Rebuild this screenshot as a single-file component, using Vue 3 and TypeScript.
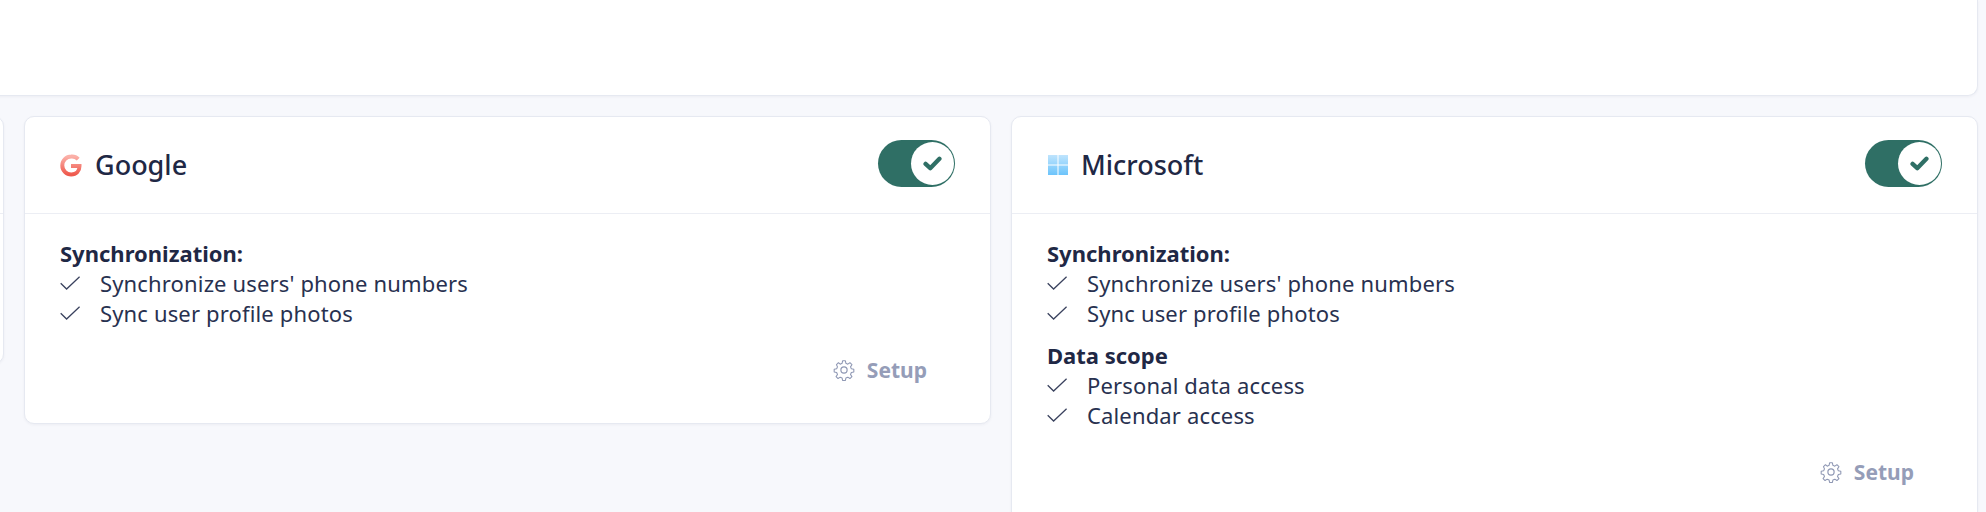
<script setup lang="ts">
interface Section { title: string; items: string[] }
interface Provider { name: string; sections: Section[] }
const google: Provider = {
  name: 'Google',
  sections: [{ title: 'Synchronization:', items: ["Synchronize users' phone numbers", 'Sync user profile photos'] }],
}
const microsoft: Provider = {
  name: 'Microsoft',
  sections: [
    { title: 'Synchronization:', items: ["Synchronize users' phone numbers", 'Sync user profile photos'] },
    { title: 'Data scope', items: ['Personal data access', 'Calendar access'] },
  ],
}
const providers: Provider[] = [google, microsoft]
</script>

<template>
  <div class="page">
    <div class="top-card"></div>
    <div class="grid">
      <section class="card">
        <div class="head"></div>
        <div class="stub"></div>
      </section>
      <section v-for="p in providers" :key="p.name" class="card">
        <header class="head">
          <div class="brand">
            <svg v-if="p.name === 'Google'" class="logo" viewBox="0 0 22 23" width="22" height="23">
              <defs>
                <linearGradient id="gg" x1="0" y1="0" x2="0" y2="1">
                  <stop offset="0" stop-color="#fbb0a8" />
                  <stop offset="1" stop-color="#ef5a4e" />
                </linearGradient>
              </defs>
              <path d="M18.2 5.2A8.7 8.7 0 0 0 11.2 2.6a8.9 8.9 0 0 0 0 17.8c5 0 8.3-3.4 8.3-8.5H11" fill="none" stroke="url(#gg)" stroke-width="4" />
            </svg>
            <svg v-else class="logo ms-logo" viewBox="0 0 20 20" width="20" height="20">
              <defs>
                <linearGradient id="ms" x1="0" y1="0" x2="0" y2="1">
                  <stop offset="0" stop-color="#bfe4fd" />
                  <stop offset="1" stop-color="#6cc4fb" />
                </linearGradient>
              </defs>
              <path d="M0 0h9.5v9.5H0zM10.5 0H20v9.5h-9.5zM0 10.5h9.5V20H0zM10.5 10.5H20V20h-9.5z" fill="url(#ms)" />
            </svg>
            <h2 class="name">{{ p.name }}</h2>
          </div>
          <div class="toggle">
            <span class="knob">
              <svg viewBox="0 0 20 16" width="19" height="15">
                <path d="M2.6 8.4 7.6 13 17.4 3" fill="none" stroke="#2f6f65" stroke-width="4.6" stroke-linecap="round" stroke-linejoin="round" />
              </svg>
            </span>
          </div>
        </header>
        <div class="body">
          <div v-for="s in p.sections" :key="s.title" class="section">
            <div class="section-title">{{ s.title }}</div>
            <div v-for="item in s.items" :key="item" class="item">
              <svg class="tick" viewBox="0 0 20 14" width="20" height="14">
                <path d="M.7 7.2 6.6 13 19.6.8" fill="none" stroke="#3a425e" stroke-width="1.3" />
              </svg>
              <span>{{ item }}</span>
            </div>
          </div>
          <div class="actions">
            <button class="setup" type="button">
              <svg viewBox="0 0 24 24" width="22" height="22" fill="none" stroke="#8f98b4" stroke-width="1.3" stroke-linejoin="round">
                <circle cx="12" cy="12" r="3.4" />
                <path d="M10.3 2h3.4l.6 3 2.3 1 2.6-1.7 2.4 2.4-1.7 2.6 1 2.3 3 .6v3.4l-3 .6-1 2.3 1.7 2.6-2.4 2.4-2.6-1.7-2.3 1-.6 3h-3.4l-.6-3-2.3-1-2.6 1.7-2.4-2.4 1.7-2.6-1-2.3-3-.6v-3.4l3-.6 1-2.3L2.9 6.7l2.4-2.4L7.4 6l2.3-1z" transform="translate(1.2 .2) scale(.9)" />
              </svg>
              <span>Setup</span>
            </button>
          </div>
        </div>
      </section>
    </div>
  </div>
</template>

<style>
html, body { margin: 0; background: #f7f8fc; overflow: hidden; }
</style>

<style scoped>
.page {
  width: 1986px;
  height: 512px;
  overflow: hidden;
  background: #f7f8fc;
  font-family: "Noto Sans", "Inter", sans-serif;
  color: #1f2845;
}
.top-card {
  height: 96px;
  margin: 0 8px 0 -20px;
  background: #fff;
  border-radius: 0 0 10px 10px;
  border: 1px solid #e6e9f1;
  border-top: 0;
  box-sizing: border-box;
  box-shadow: 0 1px 3px rgba(31, 40, 69, 0.05);
}
.grid {
  display: grid;
  grid-template-columns: repeat(3, 967px);
  column-gap: 20px;
  align-items: start;
  margin: 20px 0 0 -963px;
}
.card {
  background: #fff;
  border: 1px solid #e6e9f1;
  border-radius: 10px;
  box-sizing: border-box;
  box-shadow: 0 1px 3px rgba(31, 40, 69, 0.05);
}
.stub { height: 149px; }
.head {
  height: 97px;
  box-sizing: border-box;
  padding: 0 35px;
  display: flex;
  align-items: center;
  justify-content: space-between;
  border-bottom: 1px solid #eceef4;
}
.brand { display: flex; align-items: center; gap: 13px; }
.name { margin: 0; font-size: 27px; font-weight: 500; line-height: 32px; }
.logo { display: block; }
.ms-logo { margin-left: 1px; }
.toggle {
  width: 77px;
  height: 47px;
  box-sizing: border-box;
  border-radius: 24px;
  background: #2f6f65;
  padding: 2px 1px 2px 33px;
  margin-bottom: 3px;
}
.knob {
  width: 43px;
  height: 43px;
  border-radius: 50%;
  background: #fff;
  display: flex;
  align-items: center;
  justify-content: center;
}
.body { padding: 24px 35px 0; }
.section { margin-bottom: 12px; }
.section-title { font-size: 22px; font-weight: 700; line-height: 30px; }
.item {
  display: flex;
  align-items: center;
  gap: 20px;
  font-size: 22px;
  line-height: 30px;
  letter-spacing: 0.15px;
  color: #283150;
}
.tick { flex: none; }
.actions { display: flex; justify-content: flex-end; padding: 15px 28px 38px 0; }
.setup {
  display: flex;
  align-items: center;
  gap: 12px;
  padding: 0;
  border: 0;
  background: none;
  font: inherit;
  font-size: 21px;
  font-weight: 700;
  line-height: 30px;
  color: #959db8;
}
</style>
